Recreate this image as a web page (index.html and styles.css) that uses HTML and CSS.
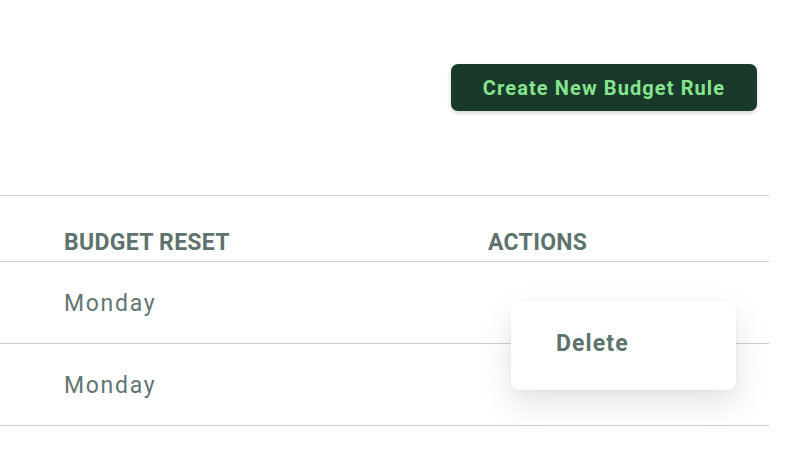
FILE: index.html
```html
<!DOCTYPE html>
<html>
<head>
<meta charset="utf-8">
<link rel="stylesheet" href="styles.css">
</head>
<body>
<div class="page">
  <div class="toolbar">
    <button class="btn-create">Create New Budget Rule</button>
  </div>
  <div class="rules">
    <div class="row head">
      <div class="cell">BUDGET RESET</div>
      <div class="cell">ACTIONS</div>
    </div>
    <div class="row">
      <div class="cell day">Monday</div>
      <div class="cell"></div>
    </div>
    <div class="row">
      <div class="cell day">Monday</div>
      <div class="cell"></div>
    </div>
    <div class="menu">
      <div class="menu-item">Delete</div>
    </div>
  </div>
</div>
</body>
</html>
```

FILE: styles.css
```css
html, body {
  margin: 0;
  padding: 0;
  background: #ffffff;
}
body {
  font-family: Roboto, "Liberation Sans", sans-serif;
  color: #5f7370;
}
.page {
  width: 769px;
  padding-top: 64px;
}
.toolbar {
  display: flex;
  justify-content: flex-end;
  padding-right: 12px;
}
.btn-create {
  width: 306px;
  height: 47px;
  border: none;
  border-radius: 7px;
  background: #19392a;
  color: #86e48f;
  font-family: Roboto, "Liberation Sans", sans-serif;
  font-weight: 700;
  font-size: 20px;
  letter-spacing: 1.1px;
  box-shadow: 0 2px 4px rgba(0, 0, 0, 0.18);
  cursor: pointer;
}
.rules {
  position: relative;
  margin-top: 84px;
  border-top: 1px solid #c9d0ce;
}
.row {
  display: grid;
  grid-template-columns: 424px 1fr;
  padding-left: 64px;
  height: 81px;
  align-items: center;
  border-bottom: 1px solid #c9d0ce;
}
.row.head {
  height: 66px;
  box-sizing: border-box;
  padding-top: 28px;
  font-weight: 700;
  font-size: 23px;
  letter-spacing: 0.3px;
  color: #5e736e;
}
.day {
  font-size: 23px;
  letter-spacing: 1.7px;
  color: #627673;
  padding-top: 2px;
}
.menu {
  position: absolute;
  left: 511px;
  top: 105px;
  width: 225px;
  height: 89px;
  background: #ffffff;
  border-radius: 8px;
  box-shadow: 0 14px 34px rgba(0, 0, 0, 0.11), 0 2px 6px rgba(0, 0, 0, 0.04);
  display: flex;
  align-items: center;
}
.menu-item {
  padding-left: 45px;
  font-weight: 700;
  font-size: 23px;
  letter-spacing: 1.1px;
  color: #5e736e;
  margin-top: -4px;
}
```
